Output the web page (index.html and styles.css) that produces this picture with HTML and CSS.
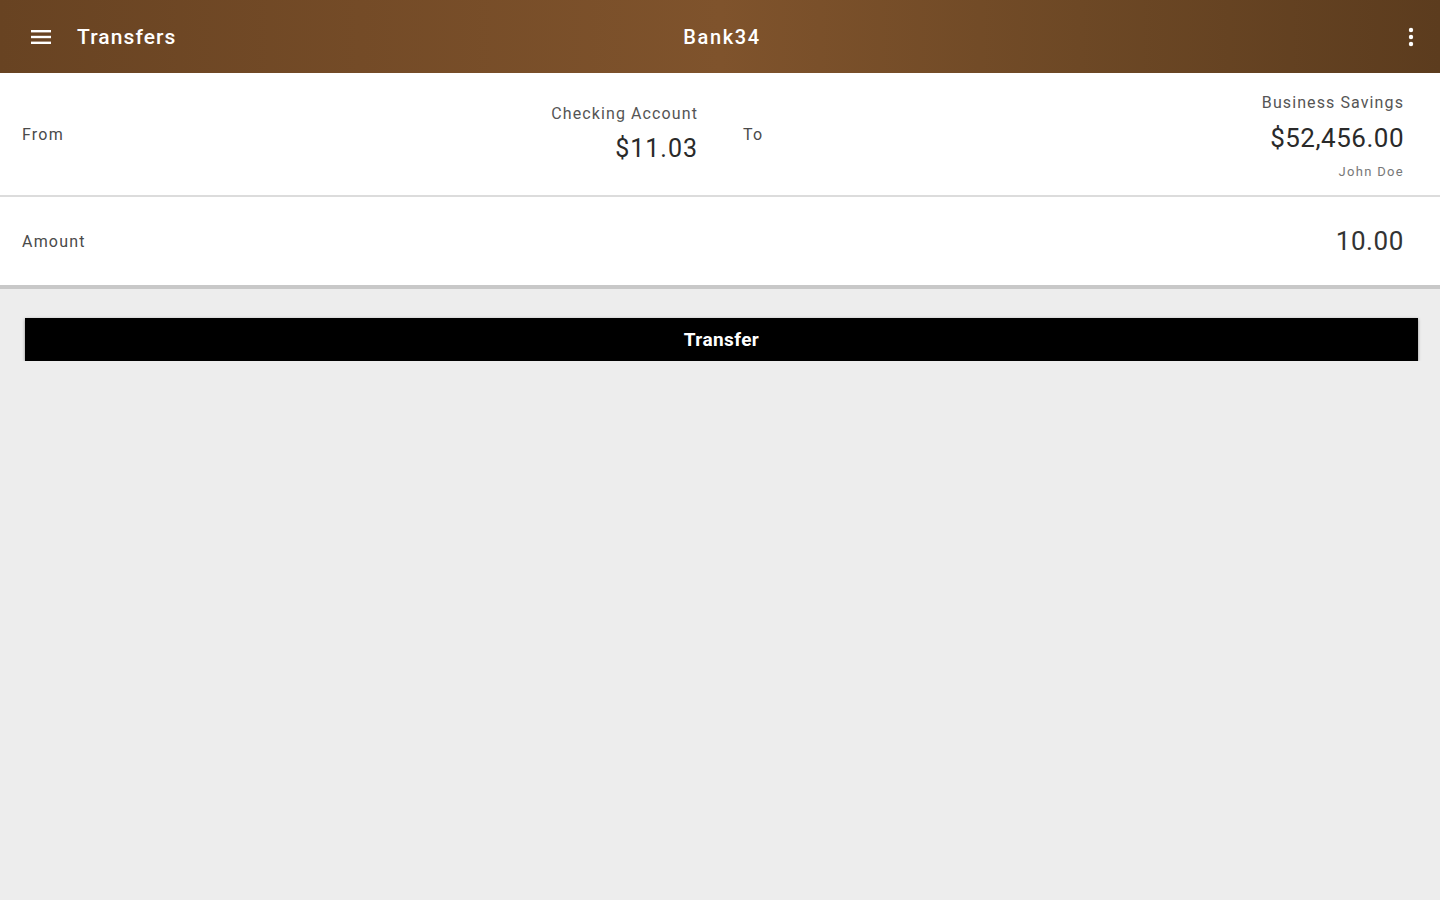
FILE: index.html
```html
<!DOCTYPE html>
<html lang="en">
<head>
    <meta charset="UTF-8">
    <meta name="viewport" content="width=device-width, initial-scale=1.0">
    <title>Transfers - Bank34</title>
    <link rel="stylesheet" href="styles.css">
</head>
<body>
    <header class="toolbar">
        <div class="toolbar-left">
            <svg class="icon-menu" width="22" height="16" viewBox="0 0 22 16">
                <rect x="1" y="1" width="20" height="2.4" fill="#fff"/>
                <rect x="1" y="6.8" width="20" height="2.4" fill="#fff"/>
                <rect x="1" y="12.6" width="20" height="2.4" fill="#fff"/>
            </svg>
            <span class="page-title">Transfers</span>
        </div>
        <div class="brand">Bank34</div>
        <div class="toolbar-right">
            <svg class="icon-more" width="6" height="20" viewBox="0 0 6 20">
                <circle cx="3" cy="3" r="2.2" fill="#fff"/>
                <circle cx="3" cy="10" r="2.2" fill="#fff"/>
                <circle cx="3" cy="17" r="2.2" fill="#fff"/>
            </svg>
        </div>
    </header>

    <section class="panel accounts">
        <div class="account-col from-col">
            <span class="field-label">From</span>
            <div class="account-info">
                <div class="account-name">Checking Account</div>
                <div class="account-balance small">$11.03</div>
            </div>
        </div>
        <div class="account-col to-col">
            <span class="field-label">To</span>
            <div class="account-info with-owner">
                <div class="account-name">Business Savings</div>
                <div class="account-balance">$52,456.00</div>
                <div class="account-owner">John Doe</div>
            </div>
        </div>
    </section>

    <section class="panel amount-row">
        <span class="field-label">Amount</span>
        <span class="amount-value">10.00</span>
    </section>

    <div class="actions">
        <button type="button" class="btn-transfer">Transfer</button>
    </div>
</body>
</html>
```

FILE: styles.css
```css
/* Bank34 transfers screen */
body {
    font-family: Roboto, "Noto Sans", Arial, sans-serif;
    margin: 0;
    padding: 0;
    background-color: #ededed;
    color: #333;
}

.toolbar {
    height: 73px;
    display: flex;
    align-items: center;
    justify-content: space-between;
    padding: 0 26px 0 30px;
    background: linear-gradient(90deg, #684322 0%, #744b27 25%, #7f532c 50%, #6d4825 75%, #5c3c1e 100%);
    color: #fff;
    box-sizing: border-box;
}

.toolbar-left {
    display: flex;
    align-items: center;
    gap: 25px;
    width: 300px;
}

.icon-menu {
    display: block;
}

.page-title {
    font-size: 21px;
    font-weight: 500;
    letter-spacing: 1.1px;
}

.brand {
    font-size: 20px;
    font-weight: 500;
    letter-spacing: 1.6px;
}

.toolbar-right {
    width: 300px;
    display: flex;
    justify-content: flex-end;
}

.icon-more {
    display: block;
}

.panel {
    background-color: #fff;
}

.accounts {
    display: flex;
    height: 122px;
    border-bottom: 2px solid #dcdcdc;
}

.account-col {
    width: 50%;
    box-sizing: border-box;
    display: flex;
    align-items: center;
    justify-content: space-between;
}

.from-col {
    padding: 0 22px 0 22px;
}

.to-col {
    padding: 0 36px 0 23px;
}

.field-label {
    font-size: 16px;
    color: #4a4a4a;
    letter-spacing: 1.2px;
}

.account-info {
    text-align: right;
}

.account-info.with-owner {
    margin-top: 6px;
}

.account-name {
    font-size: 16px;
    color: #555;
    line-height: 30px;
    letter-spacing: 1.1px;
}

.account-balance {
    font-size: 26px;
    color: #2a2a2a;
    line-height: 40px;
    letter-spacing: 0.5px;
}

.account-balance.small {
    font-size: 25px;
    letter-spacing: 1px;
}

.account-owner {
    font-size: 13px;
    color: #777;
    line-height: 28px;
    letter-spacing: 1.3px;
}

.amount-row {
    height: 88px;
    display: flex;
    align-items: center;
    justify-content: space-between;
    padding: 0 36px 0 22px;
    border-bottom: 4px solid #c8c8c8;
}

.amount-value {
    font-size: 26px;
    color: #333;
    letter-spacing: 0.6px;
}

.actions {
    padding: 29px 22px 0 25px;
}

.btn-transfer {
    width: 100%;
    height: 43px;
    background-color: #000;
    color: #fff;
    font-family: Roboto, "Noto Sans", Arial, sans-serif;
    font-size: 19px;
    font-weight: 700;
    letter-spacing: 0.4px;
    border: none;
    cursor: pointer;
    box-shadow: 0 1px 3px rgba(0, 0, 0, 0.4);
}
```
